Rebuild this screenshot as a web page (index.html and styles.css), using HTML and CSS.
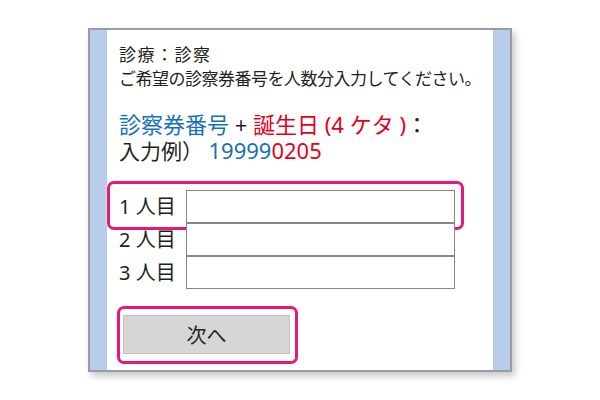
FILE: index.html
```html
<!DOCTYPE html>
<html lang="ja">
  <head>
    <meta charset="UTF-8" />
    <title>診療：診察</title>
    <link rel="stylesheet" href="styles.css">
  </head>
  <body>
    <div class="stage">
      <div class="frame">
        <div class="side"></div>
        <div class="content">
          <p class="lead lead-title">診療：診察</p>
          <p class="lead">ご希望の診察券番号を人数分入力してください。</p>

          <div class="hint">
            <p class="hint-rule"><span class="blue">診察券番号</span> + <span class="red">誕生日 (4 ケタ )</span>：</p>
            <p>入力例） <span class="blue num">19999</span><span class="red num">0205</span></p>
          </div>

          <form class="entry-form">
            <div class="entry-row">
              <label class="entry-label" for="p1">1 人目</label>
              <input class="entry-input" id="p1" type="text" />
              <span class="mark mark-row"></span>
            </div>
            <div class="entry-row">
              <label class="entry-label" for="p2">2 人目</label>
              <input class="entry-input" id="p2" type="text" />
            </div>
            <div class="entry-row">
              <label class="entry-label" for="p3">3 人目</label>
              <input class="entry-input" id="p3" type="text" />
            </div>

            <div class="next-wrap">
              <button type="button" class="next-button">次へ</button>
              <span class="mark mark-button"></span>
            </div>
          </form>
        </div>
        <div class="side"></div>
      </div>
    </div>
  </body>
</html>
```

FILE: styles.css
```css
* {
  margin: 0;
  padding: 0;
  box-sizing: border-box;
}

body {
  font-family: "Noto Sans", "Noto Sans CJK JP", sans-serif;
  background: white;
  color: #231f20;
  height: 100vh;
}

.stage {
  height: 100vh;
  display: flex;
  align-items: center;
  justify-content: center;
}

.frame {
  width: 424px;
  height: 344px;
  display: flex;
  border: 2px solid #9b9ba8;
  box-shadow: 3px 4px 7px rgba(0, 0, 0, 0.22);
  background: white;
}

.side {
  width: 17px;
  background: #b8cde9;
}

.content {
  flex: 1;
  padding: 13px 12px 0 12px;
  background: white;
}

.lead {
  font-size: 17px;
  line-height: 24px;
  letter-spacing: -0.5px;
}

.lead-title {
  letter-spacing: 1.5px;
}

.hint {
  margin-top: 20px;
  font-size: 21px;
  line-height: 26px;
}

.hint-rule {
  font-size: 22px;
}

.blue {
  color: #1670b9;
}

.red {
  color: #e5001d;
}

.num {
  font-size: 22px;
}

.entry-form {
  margin-top: 26px;
}

.entry-row {
  position: relative;
  display: flex;
  align-items: center;
  height: 33px;
}

.entry-label {
  width: 67px;
  font-size: 20px;
  line-height: 33px;
}

.entry-input {
  width: 269px;
  height: 33px;
  border: 1px solid #8a8686;
  background: white;
  font-size: 16px;
  font-family: inherit;
}

.entry-input:focus {
  outline: none;
}

.next-wrap {
  position: relative;
  display: inline-block;
  margin: 26px 0 0 4px;
}

.next-button {
  display: block;
  width: 167px;
  height: 39px;
  background: #d6d6d6;
  border: 1px solid #c2c2c2;
  color: #231f20;
  font-family: inherit;
  font-size: 20px;
  cursor: pointer;
}

.mark {
  position: absolute;
  border: 3px solid #e8187a;
  border-radius: 7px;
  box-shadow: 0 0 2px rgba(255, 255, 255, 0.9);
  pointer-events: none;
}

.mark-row {
  left: -12px;
  top: -9px;
  right: 17px;
  bottom: -7px;
}

.mark-button {
  left: -6px;
  top: -9px;
  right: -8px;
  bottom: -10px;
}
```
